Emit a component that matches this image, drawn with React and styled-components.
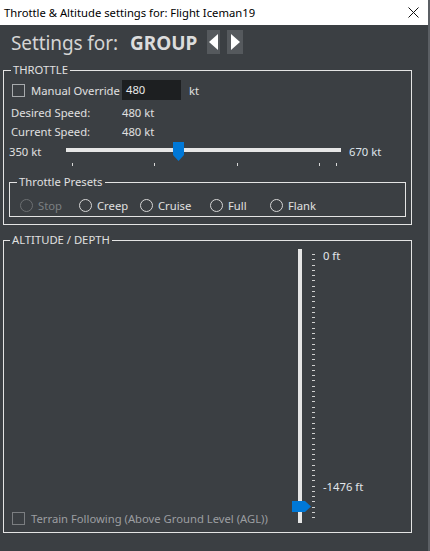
import React from "react";
import styled, { createGlobalStyle } from "styled-components";

const Global = createGlobalStyle`
  html, body { margin: 0; padding: 0; background: #3b3f43; }
  body { font-family: "Noto Sans", "Open Sans", sans-serif; white-space: nowrap; }
`;

const BG = "#3b3f43";
const FG = "#e0e0e0";
const LINE = "#e4e4e4";
const BLUE = "#0078d7";
const FS = "11.25px";

const Window = styled.div`
  width: 428px;
  height: 551px;
  border-right: 2px solid #5b5f64;
  background: ${BG};
  display: flex;
  flex-direction: column;
  overflow: hidden;
`;

const TitleBar = styled.div`
  height: 25px;
  background: #ffffff;
  display: flex;
  align-items: center;
  justify-content: space-between;
  padding: 0 9px 0 4px;
  font-size: ${FS};
  color: #000;
`;

const TitleText = styled.span`
  line-height: 16px;
  margin-top: 1px;
`;

const Body = styled.div`
  flex: 1;
  display: flex;
  flex-direction: column;
  color: ${FG};
  font-size: ${FS};
`;

const Header = styled.div`
  height: 45px;
  display: flex;
  align-items: flex-start;
  padding: 5px 0 0 11px;
  box-sizing: border-box;
`;

const HeaderLabel = styled.span`
  font-size: 19px;
  line-height: 26px;
  color: #d4d4d4;
  width: 119px;
  letter-spacing: -0.1px;
`;

const HeaderValue = styled.span`
  font-size: 19px;
  line-height: 26px;
  font-weight: 700;
  color: #dcdcdc;
  width: 77px;
`;

const ArrowButton = styled.button`
  width: ${(p) => p.$w}px;
  height: 24px;
  margin-right: ${(p) => p.$mr || 0}px;
  padding: 0;
  border: none;
  background: #55595d;
  display: flex;
  align-items: center;
  justify-content: center;
`;

const GroupBox = styled.div`
  position: relative;
  box-sizing: border-box;
  border: 1px solid ${LINE};
  margin-left: ${(p) => p.$ml}px;
  width: ${(p) => p.$w}px;
  height: ${(p) => p.$h}px;
  margin-top: ${(p) => p.$mt || 0}px;
  padding: ${(p) => p.$pad || 0};
`;

const Legend = styled.span`
  position: absolute;
  top: -9px;
  left: ${(p) => p.$left}px;
  padding: 0 2px;
  background: ${BG};
  line-height: 16px;
  font-size: ${FS};
  color: ${FG};
`;

const Row = styled.div`
  display: flex;
  align-items: center;
  height: ${(p) => p.$h}px;
  margin-top: ${(p) => p.$mt || 0}px;
  padding-left: ${(p) => p.$pl || 0}px;
`;

const CheckBox = styled.span`
  width: 13px;
  height: 13px;
  box-sizing: border-box;
  border: 1px solid ${(p) => (p.$disabled ? "#7b7e81" : "#a7aaad")};
  flex: none;
`;

const CheckLabel = styled.span`
  margin-left: ${(p) => p.$ml || 7}px;
  width: ${(p) => p.$w || "auto"};
  color: ${(p) => (p.$disabled ? "#9c9ea1" : FG)};
  font-size: ${FS};
`;

const TextInput = styled.div`
  width: 59px;
  height: 20px;
  box-sizing: border-box;
  background: #1d1f21;
  color: #e8e8e8;
  padding: 1px 0 0 4px;
  line-height: 17px;
  margin-left: 1px;
  font-size: ${FS};
`;

const Unit = styled.span`
  margin-left: 8px;
`;

const InfoLabel = styled.span`
  width: 111px;
`;

const SliderRow = styled.div`
  display: grid;
  grid-template-columns: 49px 275px auto;
  column-gap: 8px;
  align-items: start;
  margin-top: 1px;
  margin-left: 5px;
  height: 26px;
`;

const SliderLabel = styled.span`
  line-height: 16px;
  margin-top: 3px;
`;

const SliderLabelRight = styled(SliderLabel)`
  color: #dfe5ec;
`;

const HSlider = styled.div`
  position: relative;
  height: 26px;
`;

const HTrack = styled.div`
  position: absolute;
  left: 0;
  right: 0;
  top: 7px;
  height: 4px;
  background: #e6e6e6;
`;

const HTick = styled.div`
  position: absolute;
  top: 22px;
  width: 1px;
  height: 3px;
  background: #d8d8d8;
`;

const ThumbSvg = styled.svg`
  position: absolute;
  display: block;
`;

const RadioRow = styled.div`
  display: flex;
  align-items: center;
  height: 16px;
  margin-top: 14px;
  padding-left: 10px;
`;

const RadioItem = styled.div`
  display: flex;
  align-items: center;
  width: ${(p) => (p.$w ? `${p.$w}px` : "auto")};
  color: ${(p) => (p.$disabled ? "#7c7f82" : FG)};
`;

const RadioCircle = styled.span`
  width: 13px;
  height: 13px;
  box-sizing: border-box;
  border-radius: 50%;
  border: 1px solid ${(p) => (p.$disabled ? "#6c6f72" : "#d6d6d6")};
  margin-right: 5px;
  flex: none;
`;

const AltGrid = styled.div`
  display: grid;
  grid-template-columns: 288px 24px auto;
  height: 100%;
`;

const TerrainRow = styled.div`
  display: flex;
  align-items: center;
  align-self: end;
  height: 16px;
  margin: 0 0 1px 8px;
`;

const VSlider = styled.div`
  position: relative;
  height: 274px;
`;

const VTrack = styled.div`
  position: absolute;
  left: 6px;
  top: 0;
  width: 4px;
  height: 274px;
  background: #e6e6e6;
`;

const VTicks = styled.div`
  position: absolute;
  left: 20px;
  top: 5px;
  height: 265px;
  width: 3px;
  display: flex;
  flex-direction: column;
  justify-content: space-between;
`;

const VTick = styled.span`
  display: block;
  height: 1px;
  width: 3px;
  background: #d0d0d0;
`;

const ScaleLabels = styled.div`
  display: flex;
  flex-direction: column;
  padding-left: 7px;
`;

const ScaleLabel = styled.span`
  line-height: 16px;
  margin-top: ${(p) => p.$mt}px;
  color: #e2e6ea;
`;

const hMin = 350;
const hMax = 670;
const hValue = 480;
const hTicks = [350, 450, 550, 650, 670];
const trackW = 275;
const thumbW = 11;
const pos = (v) => thumbW / 2 + ((v - hMin) / (hMax - hMin)) * (trackW - thumbW);

export default function App() {
  const ticks = Array.from({ length: 51 }, (_, i) => i);
  const thumbLeft = pos(hValue) - thumbW / 2;
  return (
    <>
      <Global />
      <Window>
        <TitleBar>
          <TitleText>Throttle &amp; Altitude settings for: Flight Iceman19</TitleText>
          <svg width="11" height="11" viewBox="0 0 11 11">
            <path d="M0.5 0.5 L10.5 10.5 M10.5 0.5 L0.5 10.5" stroke="#111" strokeWidth="1" />
          </svg>
        </TitleBar>
        <Body>
          <Header>
            <HeaderLabel>Settings for:</HeaderLabel>
            <HeaderValue>GROUP</HeaderValue>
            <ArrowButton $w={13} $mr={7}>
              <svg width="9" height="16" viewBox="0 0 9 16">
                <polygon points="9,0 9,16 0,8" fill="#fff" />
              </svg>
            </ArrowButton>
            <ArrowButton $w={16}>
              <svg width="9" height="16" viewBox="0 0 9 16">
                <polygon points="0,0 0,16 9,8" fill="#fff" />
              </svg>
            </ArrowButton>
          </Header>

          <GroupBox $ml={3} $w={409} $h={155}>
            <Legend $left={7}>THROTTLE</Legend>
            <Row $h={20} $mt={9} $pl={8}>
              <CheckBox />
              <CheckLabel $w="90px" $ml={6}>Manual Override</CheckLabel>
              <TextInput>480</TextInput>
              <Unit>kt</Unit>
            </Row>
            <Row $h={18} $mt={3} $pl={7}>
              <InfoLabel>Desired Speed:</InfoLabel>
              <span>480 kt</span>
            </Row>
            <Row $h={18} $mt={1} $pl={7}>
              <InfoLabel>Current Speed:</InfoLabel>
              <span>480 kt</span>
            </Row>
            <SliderRow>
              <SliderLabel>350 kt</SliderLabel>
              <HSlider>
                <HTrack />
                {hTicks.map((t) => (
                  <HTick key={t} style={{ left: Math.round(pos(t)) }} />
                ))}
                <ThumbSvg width="11" height="19" viewBox="0 0 11 19" style={{ left: thumbLeft, top: 1 }}>
                  <polygon points="0,0 11,0 11,13 5.5,19 0,13" fill={BLUE} />
                </ThumbSvg>
              </HSlider>
              <SliderLabelRight>670 kt</SliderLabelRight>
            </SliderRow>
            <GroupBox $ml={5} $w={397} $h={35} $mt={15}>
              <Legend $left={7}>Throttle Presets</Legend>
              <RadioRow>
                <RadioItem $w={59} $disabled>
                  <RadioCircle $disabled />
                  Stop
                </RadioItem>
                <RadioItem $w={61}>
                  <RadioCircle />
                  Creep
                </RadioItem>
                <RadioItem $w={70}>
                  <RadioCircle />
                  Cruise
                </RadioItem>
                <RadioItem $w={60}>
                  <RadioCircle />
                  Full
                </RadioItem>
                <RadioItem>
                  <RadioCircle />
                  Flank
                </RadioItem>
              </RadioRow>
            </GroupBox>
          </GroupBox>

          <GroupBox $ml={3} $w={409} $h={293} $mt={15} $pad="8px 0 5px 0">
            <Legend $left={6}>ALTITUDE / DEPTH</Legend>
            <AltGrid>
              <TerrainRow>
                <CheckBox $disabled />
                <CheckLabel $disabled $ml={6}>
                  Terrain Following (Above Ground Level (AGL))
                </CheckLabel>
              </TerrainRow>
              <VSlider>
                <VTrack />
                <VTicks>
                  {ticks.map((i) => (
                    <VTick key={i} />
                  ))}
                </VTicks>
                <ThumbSvg width="19" height="11" viewBox="0 0 19 11" style={{ left: 0, top: 252 }}>
                  <polygon points="0,0 13,0 19,5.5 13,11 0,11" fill={BLUE} />
                </ThumbSvg>
              </VSlider>
              <ScaleLabels>
                <ScaleLabel $mt={-1}>0 ft</ScaleLabel>
                <ScaleLabel $mt={215}>-1476 ft</ScaleLabel>
              </ScaleLabels>
            </AltGrid>
          </GroupBox>
        </Body>
      </Window>
    </>
  );
}
